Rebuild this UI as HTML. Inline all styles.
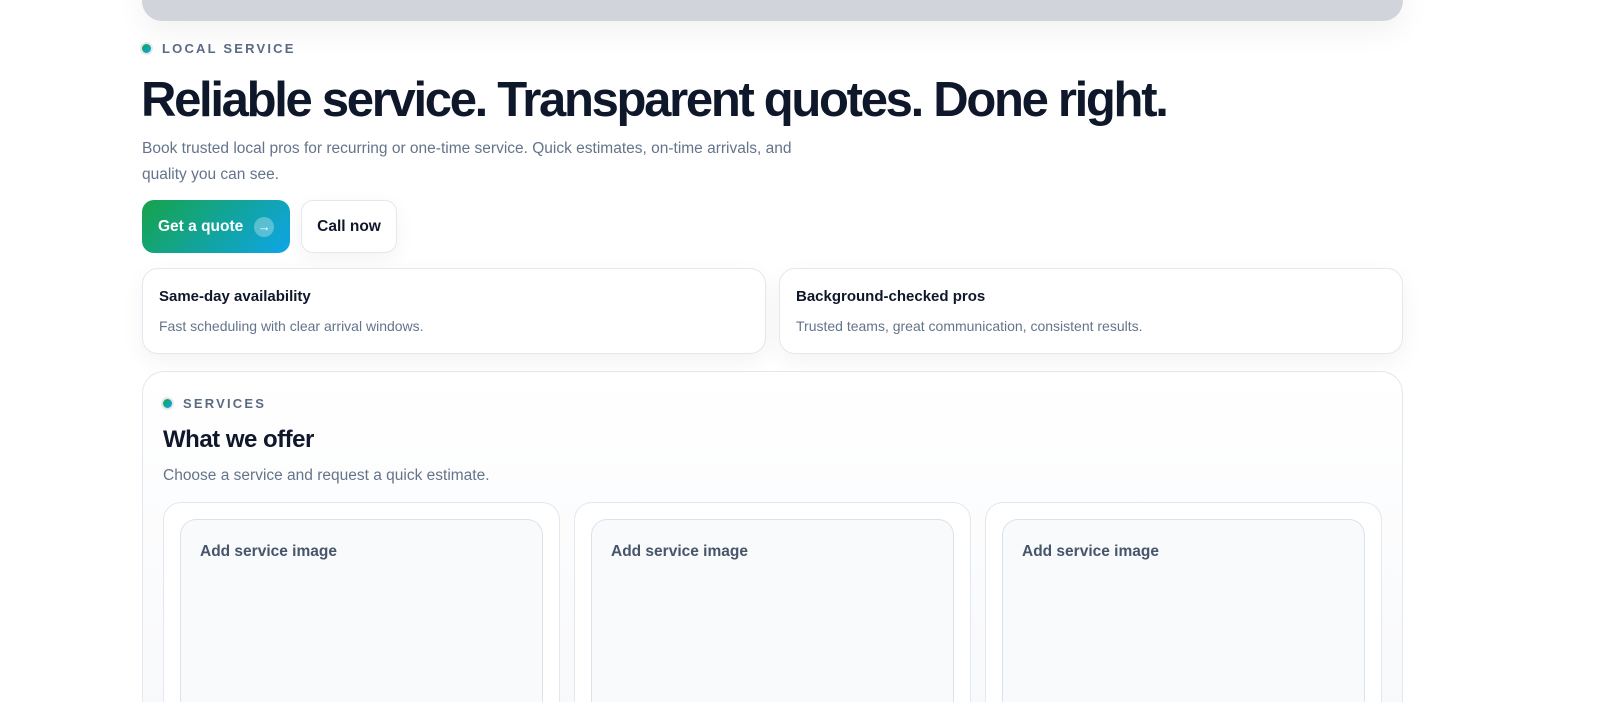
<!DOCTYPE html>
<html><head><meta charset="utf-8"><style>
*{box-sizing:border-box;margin:0;padding:0}
html,body{width:1600px;height:716px;overflow:hidden}
body{background:#fff;font-family:"Liberation Sans",sans-serif}
.wrap{position:relative;width:1600px;height:702px;overflow:hidden}
.topbar{position:absolute;left:142px;top:-20px;width:1261px;height:41px;background:#d1d5db;border-radius:0 0 20px 20px;box-shadow:0 10px 30px rgba(0,0,0,.06)}
.eyebrow{position:absolute;display:flex;align-items:center;font-size:13px;font-weight:bold;letter-spacing:2.2px;color:#5b6b82}
.dot{width:13px;height:13px;border-radius:50%;background:linear-gradient(135deg,#16a34a,#0ea5e9);border:2px solid #e5e7eb;margin-right:9px}
h1{position:absolute;left:141px;top:72px;font-size:49px;letter-spacing:-2.3px;color:#0f172a;font-weight:bold;white-space:nowrap}
.sub{position:absolute;left:142px;top:136px;width:690px;font-size:15.5px;line-height:26px;color:#64748b}
.btn{position:absolute;top:200px;height:53px;border-radius:12px;font-size:15.5px;font-weight:bold;display:flex;align-items:center}
.b1{left:142px;width:148px;background:linear-gradient(135deg,#16a34a,#0ea5e9);color:#fff;padding-left:16px}
.b1 .ar{width:20px;height:20px;border-radius:50%;background:rgba(255,255,255,.3);margin-left:11px;display:flex;align-items:center;justify-content:center;font-size:13px}
.b2{left:301px;width:96px;background:#fff;border:1px solid #e2e8f0;color:#0f172a;justify-content:center;box-shadow:0 6px 20px rgba(0,0,0,.05)}
.card{position:absolute;top:268px;height:86px;width:624px;border:1px solid #e2e8f0;border-radius:16px;background:#fff;padding:19px 16px;box-shadow:0 8px 24px rgba(0,0,0,.05)}
.card b{display:block;font-size:15px;color:#0f172a}
.card span{display:block;margin-top:13px;font-size:14px;color:#64748b}
.sec{position:absolute;left:142px;top:371px;width:1261px;height:340px;border:1px solid #e2e8f0;border-bottom:none;border-radius:22px 22px 0 0;background:linear-gradient(180deg,#fff,#f8f9fb)}
h2{position:absolute;left:163px;top:426px;font-size:24px;color:#0f172a;letter-spacing:-.5px}
.s2{position:absolute;left:163px;top:467px;font-size:15.5px;color:#64748b}
.sc{position:absolute;top:502px;width:397px;height:210px;border:1px solid #e2e8f0;border-bottom:none;border-radius:18px 18px 0 0;background:#fff}
.img{position:absolute;left:16px;top:16px;right:16px;height:193px;border:1px solid #dde2ea;border-bottom:none;border-radius:16px 16px 0 0;background:#f8fafc;padding:23px 19px;font-size:15.5px;font-weight:bold;color:#475569}
</style></head><body><div class="wrap">
<div class="topbar"></div>
<div class="eyebrow" style="left:140px;top:41px"><div class="dot"></div>LOCAL SERVICE</div>
<h1>Reliable service. Transparent quotes. Done right.</h1>
<div class="sub">Book trusted local pros for recurring or one-time service. Quick estimates, on-time arrivals, and quality you can see.</div>
<div class="btn b1">Get a quote<div class="ar">→</div></div>
<div class="btn b2">Call now</div>
<div class="card" style="left:142px"><b>Same-day availability</b><span>Fast scheduling with clear arrival windows.</span></div>
<div class="card" style="left:779px"><b>Background-checked pros</b><span>Trusted teams, great communication, consistent results.</span></div>
<div class="sec"></div>
<div class="eyebrow" style="left:161px;top:396px"><div class="dot"></div>SERVICES</div>
<h2>What we offer</h2>
<div class="s2">Choose a service and request a quick estimate.</div>
<div class="sc" style="left:163px"><div class="img">Add service image</div></div>
<div class="sc" style="left:574px"><div class="img">Add service image</div></div>
<div class="sc" style="left:985px"><div class="img">Add service image</div></div>
</div></body></html>
